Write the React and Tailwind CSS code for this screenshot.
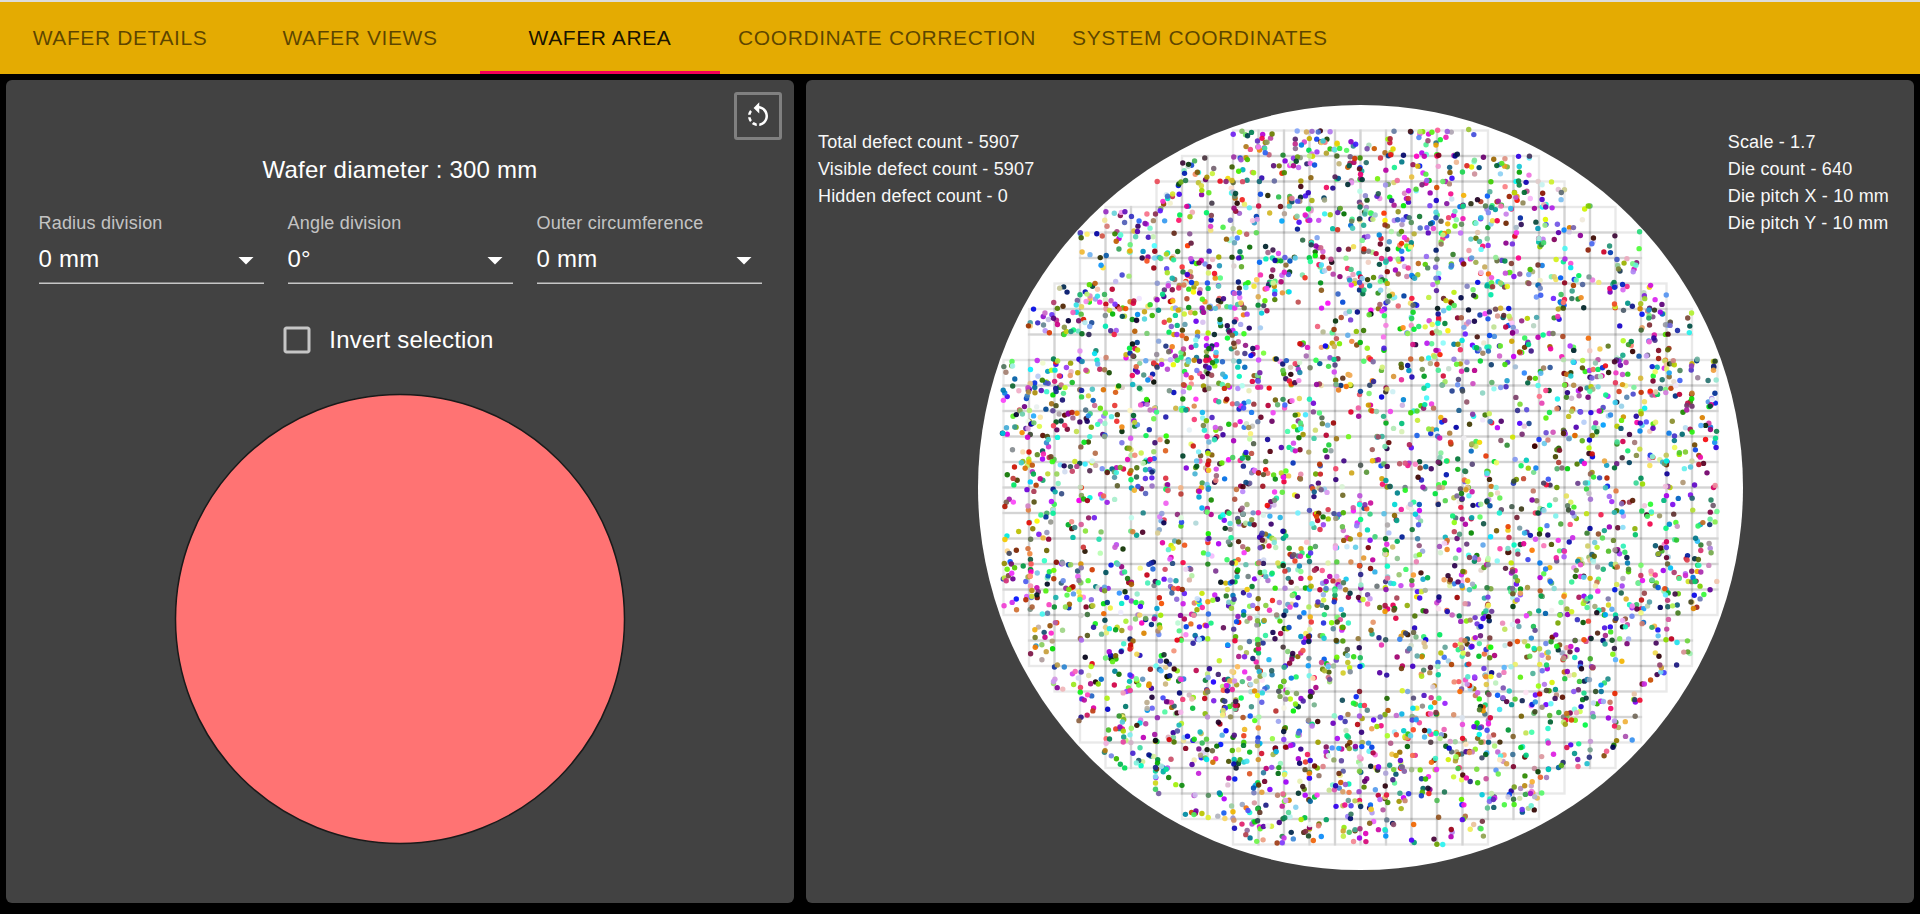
import { MdRotateLeft, MdArrowDropDown, MdCheckBoxOutlineBlank } from "react-icons/md";

const PITCH = 25.5;
const RADIUS = 382.5;

// Defect density of every die, one string per die row; rows are centred on the wafer.
const DENSITY = [
  "5969627971",
  "84748395255554",
  "8536383269644698",
  "66415616569847674350",
  "6683236318278475225242",
  "1216963867787656756427",
  "698399999222865637275367",
  "89656886520254367585400197",
  "00234599714363156567342561",
  "4896194986695354454334886787",
  "7966372867442644632225766776",
  "7897572646275143443334565655",
  "3713462376253243256244445445",
  "6664882577844245466555453444",
  "3617144525526345566544434344",
  "1833036287817744354434544434",
  "3623216265882636455555655656",
  "8986764338998556476456676767",
  "4847545975378545556467886665",
  "52656573875873442844225643",
  "50173622748381338945994224",
  "855773988582225495158505",
  "5437697374324837567763",
  "1958536363566847622426",
  "56474886766538763453",
  "8115682877744274",
  "57448277611377",
  "7745544334",
];

function makeRandom(seed) {
  let s = seed;
  return () => {
    s = (s + 0x6d2b79f5) | 0;
    let t = Math.imul(s ^ (s >>> 15), 1 | s);
    t = (t + Math.imul(t ^ (t >>> 7), 61 | t)) ^ t;
    return ((t ^ (t >>> 14)) >>> 0) / 4294967296;
  };
}

function buildWafer() {
  const random = makeRandom(5907);
  const clamp = (v) => Math.max(-1, Math.min(PITCH, v));
  const dies = [];
  const defects = [];
  DENSITY.forEach((row, r) => {
    const first = 14 - row.length / 2;
    [...row].forEach((d, i) => {
      const x = (first + i - 14) * PITCH;
      const y = (r - 14) * PITCH;
      dies.push({ x, y });
      const count = Math.round(Number(d) * 1.5);
      let px = random() * PITCH;
      let py = random() * PITCH;
      for (let k = 0; k < count; k++) {
        if (random() < 0.25) {
          px = clamp(px + (random() - 0.5) * 14);
          py = clamp(py + (random() - 0.5) * 14);
        } else {
          px = random() < 0.1 ? random() * 3 - 1 : random() * PITCH;
          py = random() < 0.06 ? random() * 3 - 1 : random() * PITCH;
        }
        // About a third of the defects get one dark or lit channel, for stronger hues.
        const rgb = [0, 0, 0].map(() => Math.floor(random() * 256));
        if (random() < 0.35) rgb[Math.floor(random() * 3)] = random() < 0.6 ? 0 : 240;
        defects.push({ x: x + px, y: y + py, fill: `rgb(${rgb.join(",")})` });
      }
    });
  });
  return { dies, defects };
}

const WAFER = buildWafer();

const TABS = [
  "Wafer details",
  "Wafer views",
  "Wafer area",
  "Coordinate correction",
  "System coordinates",
];

function Tab({ label, active, wide }) {
  return (
    <button
      className={`flex h-[72px] items-center justify-center border-b-[3px] pt-[2px] text-[21px] tracking-[0.6px] whitespace-nowrap uppercase ${
        wide ? "px-[18px]" : "w-[240px]"
      } ${active ? "border-[#f50057] text-black/90" : "border-transparent text-black/60"}`}
    >
      {label}
    </button>
  );
}

function SelectField({ label, value }) {
  return (
    <div className="flex w-[225px] flex-col">
      <span className="text-[18px] leading-[21px] tracking-[0.2px] text-white/70">{label}</span>
      <div className="mt-[6px] flex h-[44px] items-start justify-between border-b border-[#c6c6c6] shadow-[inset_0_-1px_0_#858585]">
        <span className="mt-[5px] text-[24px] leading-[28px]">{value}</span>
        <MdArrowDropDown className="mt-[2px] size-[36px]" />
      </div>
    </div>
  );
}

function Readout({ lines }) {
  return (
    <div className="text-[18px] leading-[27px] tracking-[0.17px] whitespace-nowrap text-[#f8f8f8]">
      {lines.map((line) => (
        <div key={line}>{line}</div>
      ))}
    </div>
  );
}

function WaferMap() {
  return (
    <svg viewBox="-383.5 -383.5 766 766" className="size-[766px] shrink-0 overflow-visible">
      <circle r={RADIUS} fill="#fff" />
      <g fill="none" stroke="#000" strokeOpacity="0.085" strokeWidth="2.4">
        {WAFER.dies.map((d, i) => (
          <rect key={i} x={d.x} y={d.y} width={PITCH} height={PITCH} />
        ))}
      </g>
      {WAFER.defects.map((d, i) => (
        <circle key={i} cx={d.x} cy={d.y} r="2.7" fill={d.fill} fillOpacity="0.93" />
      ))}
    </svg>
  );
}

export default function App() {
  return (
    <div className="flex h-[914px] w-[1920px] flex-col overflow-hidden bg-black font-['Liberation_Sans',Arial,sans-serif] tracking-[0.225px] text-white">
      <nav className="flex h-[74px] shrink-0 border-t-2 border-[#dcdcdc] bg-[#e4ab02]">
        {TABS.map((label, i) => (
          <Tab key={label} label={label} active={i === 2} wide={i > 2} />
        ))}
      </nav>
      <main className="flex gap-[12px] px-[6px] pt-[6px]">
        <section className="flex h-[823px] w-[788px] flex-col items-center rounded-[6px] bg-[#424242]">
          <button className="mt-[12px] mr-[12px] flex size-[48px] items-center justify-center self-end rounded-[3px] border-[3px] border-[#808080]">
            <MdRotateLeft className="size-[30px]" />
          </button>
          <h2 className="mt-[16px] text-[24px] leading-[28px]">Wafer diameter : 300 mm</h2>
          <div className="mt-[29px] flex gap-[24px]">
            <SelectField label="Radius division" value="0 mm" />
            <SelectField label="Angle division" value="0°" />
            <SelectField label="Outer circumference" value="0 mm" />
          </div>
          <label className="mt-[38px] mr-[27px] flex items-center gap-[14px] text-[24px] leading-[36px] tracking-[0.18px]">
            <MdCheckBoxOutlineBlank className="size-[36px] text-white/70" />
            Invert selection
          </label>
          <svg viewBox="-226 -226 452 452" className="mt-[35px] size-[452px]">
            <circle r="224.5" fill="#ff7373" stroke="#1a1a1a" strokeWidth="1.5" />
          </svg>
        </section>
        <section className="flex h-[823px] w-[1108px] justify-between rounded-[6px] bg-[#424242] pr-[25px] pl-[12px]">
          <div className="w-[159px] pt-[49px]">
            <Readout
              lines={[
                "Total defect count - 5907",
                "Visible defect count - 5907",
                "Hidden defect count - 0",
              ]}
            />
          </div>
          <div className="pt-[24px]">
            <WaferMap />
          </div>
          <div className="flex w-[146px] justify-end pt-[49px]">
            <Readout
              lines={["Scale - 1.7", "Die count - 640", "Die pitch X - 10 mm", "Die pitch Y - 10 mm"]}
            />
          </div>
        </section>
      </main>
    </div>
  );
}
